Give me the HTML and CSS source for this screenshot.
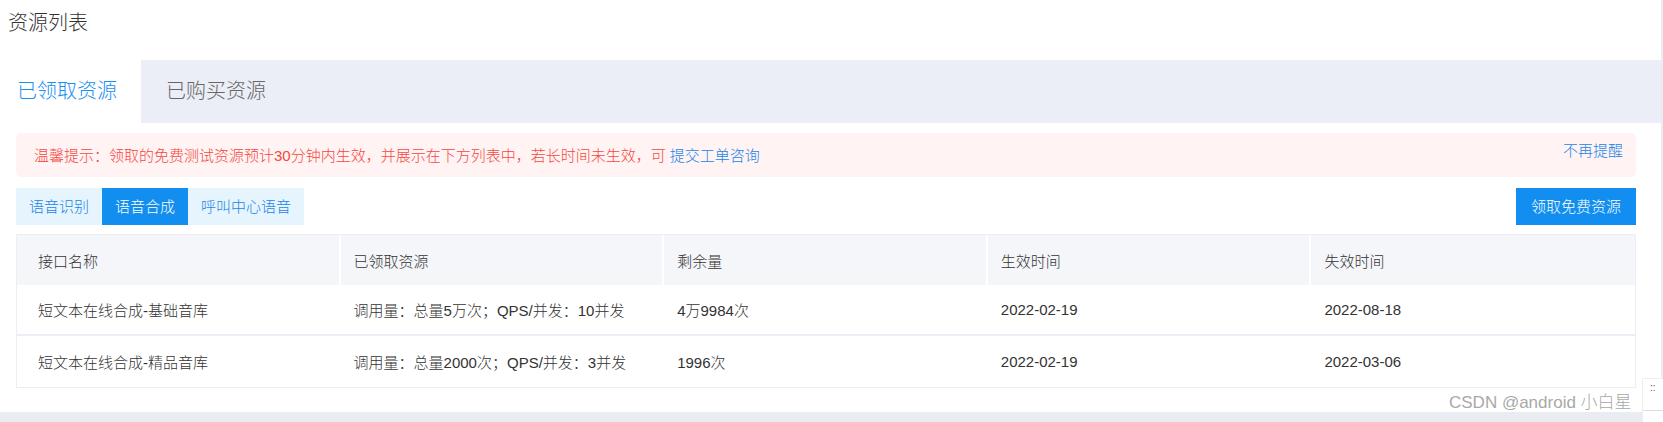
FILE: index.html
```html
<!DOCTYPE html>
<html lang="zh-CN">
<head>
<meta charset="utf-8">
<title>资源列表</title>
<link rel="stylesheet" href="styles.css">
</head>
<body>
<div class="page">
  <div class="page-title">资源列表</div>
  <div class="tabs">
    <div class="tab tab-active">已领取资源</div>
    <div class="tab">已购买资源</div>
  </div>
  <div class="content">
    <div class="alert">
      <div class="alert-text">温馨提示：领取的免费测试资源预计30分钟内生效，并展示在下方列表中，若长时间未生效，可 <span class="link">提交工单咨询</span></div>
      <div class="alert-close link">不再提醒</div>
    </div>
    <div class="toolbar">
      <div class="segments">
        <div class="seg">语音识别</div>
        <div class="seg seg-active">语音合成</div>
        <div class="seg">呼叫中心语音</div>
      </div>
      <div class="btn-primary">领取免费资源</div>
    </div>
    <div class="table">
      <div class="row row-head">
        <div class="cell">接口名称</div>
        <div class="cell">已领取资源</div>
        <div class="cell">剩余量</div>
        <div class="cell">生效时间</div>
        <div class="cell">失效时间</div>
      </div>
      <div class="row">
        <div class="cell">短文本在线合成-基础音库</div>
        <div class="cell">调用量：总量5万次；QPS/并发：10并发</div>
        <div class="cell">4万9984次</div>
        <div class="cell">2022-02-19</div>
        <div class="cell">2022-08-18</div>
      </div>
      <div class="row">
        <div class="cell">短文本在线合成-精品音库</div>
        <div class="cell">调用量：总量2000次；QPS/并发：3并发</div>
        <div class="cell">1996次</div>
        <div class="cell">2022-02-19</div>
        <div class="cell">2022-03-06</div>
      </div>
    </div>
  </div>
</div>
<div class="watermark">CSDN @android 小白星</div>
<div class="side-widget"><span class="dots">::</span><span class="side-line"></span></div>
</body>
</html>
```
FILE: styles.css
```css
* { box-sizing: border-box; }
html, body {
  margin: 0;
  padding: 0;
}
body {
  background: #e9ecf1;
  font-family: "Liberation Sans", "Noto Sans CJK SC", sans-serif;
  font-weight: 300;
  color: #333;
  width: 1663px;
  height: 422px;
  overflow: hidden;
  position: relative;
}
.page {
  width: 1661px;
  background: #fff;
}
.page-title {
  height: 60px;
  padding: 10px 8px 0;
  font-size: 20px;
  line-height: 26px;
  color: #333;
}
.tabs {
  height: 63px;
  background: #ebeef6;
  display: flex;
  gap: 8px;
}
.tab {
  padding: 0 24px 0 17px;
  font-size: 20px;
  line-height: 63px;
  color: #666;
}
.tab-active {
  background: #fff;
  color: #1890f0;
}
.content {
  padding: 10px 25px 24px 16px;
}
.alert {
  height: 44px;
  background: #fff3f3;
  border-radius: 5px;
  display: flex;
  justify-content: space-between;
  align-items: flex-start;
  padding: 0 13px 0 18px;
  font-size: 15px;
  line-height: 20px;
}
.alert-text {
  color: #f5473e;
  margin-top: 13px;
}
.alert-close {
  margin-top: 8px;
}
.link {
  color: #1a85e8;
}
.toolbar {
  margin-top: 11px;
  display: flex;
  justify-content: space-between;
  height: 37px;
}
.segments {
  display: flex;
}
.seg {
  padding: 0 13px;
  line-height: 37px;
  font-size: 15px;
  background: #e6f4fe;
  color: #1a85e8;
}
.seg-active {
  background: #118ef0;
  color: #fff;
}
.btn-primary {
  padding: 0 15px;
  line-height: 37px;
  font-size: 15px;
  background: #118ef0;
  color: #fff;
}
.table {
  margin-top: 9px;
  border: 1px solid #eceef4;
  font-size: 15px;
}
.row {
  display: grid;
  grid-template-columns: repeat(5, 1fr);
  height: 51px;
  align-items: center;
  border-bottom: 2px solid #eceef5;
}
.row:last-child {
  border-bottom: 0;
}
.row-head {
  background: #f5f6fa;
  border-bottom: 0;
  height: 50px;
  align-items: stretch;
}
.row-head .cell {
  display: flex;
  align-items: center;
  border-right: 2px solid #fff;
}
.row-head .cell:last-child {
  border-right: 0;
}
.cell {
  padding-left: 13px;
  white-space: nowrap;
}
.cell:first-child {
  padding-left: 21px;
}
.watermark {
  position: absolute;
  left: 1449px;
  top: 392px;
  font-size: 17px;
  line-height: 22px;
  color: #a8a8a8;
  text-shadow: 0 0 2px #fff;
}
.side-widget {
  position: absolute;
  left: 1642px;
  top: 378px;
  width: 21px;
  height: 44px;
  background: #fff;
  border-left: 1px solid #eee;
  border-top: 1px solid #eee;
}
.dots {
  position: absolute;
  left: 7px;
  top: 4px;
  font-size: 10px;
  line-height: 10px;
  color: #555;
}
.side-line {
  position: absolute;
  left: 0;
  right: 0;
  top: 31px;
  border-top: 1px solid #ddd;
}
```
